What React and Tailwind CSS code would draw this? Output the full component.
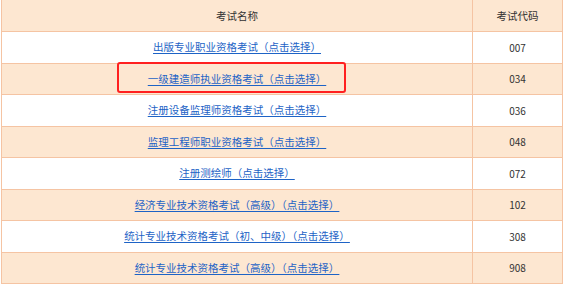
const rows = [
  { name: '出版专业职业资格考试（点击选择）', code: '007' },
  { name: '一级建造师执业资格考试（点击选择）', code: '034', marked: true },
  { name: '注册设备监理师资格考试（点击选择）', code: '036' },
  { name: '监理工程师职业资格考试（点击选择）', code: '048' },
  { name: '注册测绘师（点击选择）', code: '072' },
  { name: '经济专业技术资格考试（高级）（点击选择）', code: '102' },
  { name: '统计专业技术资格考试（初、中级）（点击选择）', code: '308' },
  { name: '统计专业技术资格考试（高级）（点击选择）', code: '908' },
];

const font = { fontFamily: '"Noto Sans CJK SC", "Liberation Sans", sans-serif' };

export default function App() {
  return (
    <div className="w-[563px] h-[285px] bg-white pl-[1px] overflow-hidden relative" style={font}>
      <table className="w-[562px] border-collapse text-[10.5px] text-[#333]">
        <thead>
          <tr className="h-[31.5px] bg-[#fde7d1]">
            <th className="w-[471px] border-x border-b border-[#f5c4a3] font-normal text-center">考试名称</th>
            <th className="border-x border-b border-[#f5c4a3] font-normal text-center">考试代码</th>
          </tr>
        </thead>
        <tbody>
          {rows.map((r, i) => (
            <tr key={r.code} className={`h-[31.5px] ${i % 2 === 1 ? 'bg-[#fde7d1]' : 'bg-white'}`}>
              <td className="border border-[#f5c4a3] text-center">
                <a href="#" className="text-[#1d63c6] underline underline-offset-2">{r.name}</a>
              </td>
              <td className="border border-[#f5c4a3] text-center text-[10px]">{r.code}</td>
            </tr>
          ))}
        </tbody>
      </table>
      {/* red highlight around the second row */}
      <div className="absolute left-[117px] top-[62px] w-[229px] h-[31px] border-2 border-[#ff2020] rounded-[3px] pointer-events-none" />
    </div>
  );
}
